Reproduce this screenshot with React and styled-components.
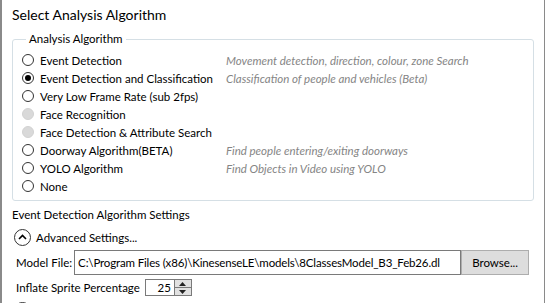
import React from "react";
import styled, { createGlobalStyle } from "styled-components";

const GlobalStyle = createGlobalStyle`
  html, body {
    margin: 0;
    padding: 0;
    background: #ffffff;
  }
  body {
    font-family: "Segoe UI", Lato, "Noto Sans", sans-serif;
    font-size: 11.5px;
    color: #000000;
  }
`;

const Frame = styled.div`
  width: 545px;
  height: 303px;
  overflow: hidden;
  border-left: 2px solid #8a8a8a;
  border-right: 1px solid #8a8a8a;
  padding-left: 10px;
  box-sizing: border-box;
  background: #ffffff;
`;

const Title = styled.div`
  font-size: 14px;
  line-height: 20px;
  padding-top: 5px;
  height: 26px;
`;

const Group = styled.fieldset`
  margin: 0;
  width: 522px;
  box-sizing: border-box;
  border: 1px solid #d5dfe5;
  border-radius: 3px;
  padding: 4px 0 5px 9px;
`;

const Legend = styled.legend`
  margin-left: 4px;
  padding: 0 3px;
  line-height: 16px;
`;

const Options = styled.div`
  display: grid;
  grid-template-columns: 204px 1fr;
  grid-auto-rows: 18px;
  align-items: center;
`;

const OptionLabel = styled.label`
  display: flex;
  align-items: center;
  gap: 6px;
  white-space: nowrap;
`;

const Radio = styled.span`
  width: 12px;
  height: 12px;
  box-sizing: border-box;
  border-radius: 50%;
  border: 1px solid ${(p) => (p.disabled ? "#d2d2d2" : "#333333")};
  background: ${(p) => (p.disabled ? "#d9d9d9" : "#ffffff")};
  display: flex;
  align-items: center;
  justify-content: center;
  flex-shrink: 0;

  &::after {
    content: "";
    width: 6px;
    height: 6px;
    border-radius: 50%;
    background: #000000;
    display: ${(p) => (p.checked ? "block" : "none")};
  }
`;

const Hint = styled.span`
  font-style: italic;
  color: #858585;
  white-space: nowrap;
`;

const SectionTitle = styled.div`
  line-height: 16px;
  padding-top: 6px;
`;

const Expander = styled.div`
  display: flex;
  align-items: center;
  gap: 5px;
  height: 20px;
  margin-top: ${(p) => p.top || 0}px;
  padding-left: 2px;
`;

const ExpandCircle = styled.span`
  width: 17px;
  height: 17px;
  box-sizing: border-box;
  border-radius: 50%;
  border: 1px solid #333333;
  display: flex;
  align-items: center;
  justify-content: center;
`;

const FieldRow = styled.div`
  display: flex;
  align-items: center;
  padding-left: 4px;
  margin-top: ${(p) => p.top || 0}px;
`;

const FieldLabel = styled.span`
  white-space: nowrap;
  margin-right: 2px;
`;

const PathBox = styled.div`
  width: 387px;
  height: 25px;
  box-sizing: border-box;
  border: 1px solid #7a7a7a;
  padding-left: 3px;
  display: flex;
  align-items: center;
  white-space: nowrap;
  overflow: hidden;
  letter-spacing: -0.15px;
`;

const Button = styled.button`
  width: 68px;
  height: 25px;
  box-sizing: border-box;
  border: 1px solid #adadad;
  background: #dddddd;
  font: inherit;
  color: #000000;
  padding: 0;
`;

const Spinner = styled.div`
  display: flex;
  width: 47px;
  height: 17px;
  box-sizing: border-box;
  border: 1px solid #7a7a7a;
  margin-left: 3px;
`;

const SpinValue = styled.span`
  flex: 1;
  text-align: right;
  padding-right: 3px;
  line-height: 15px;
`;

const SpinButtons = styled.div`
  width: 16px;
  display: flex;
  flex-direction: column;
  gap: 1px;
  background: #7a7a7a;
  border-left: 1px solid #7a7a7a;
`;

const SpinButton = styled.span`
  flex: 1;
  background: #e1e1e1;
  display: flex;
  align-items: center;
  justify-content: center;
`;

const options = [
  { label: "Event Detection", hint: "Movement detection, direction, colour, zone Search" },
  { label: "Event Detection and Classification", hint: "Classification of people and vehicles (Beta)", checked: true },
  { label: "Very Low Frame Rate (sub 2fps)" },
  { label: "Face Recognition", disabled: true },
  { label: "Face Detection & Attribute Search", disabled: true },
  { label: "Doorway Algorithm(BETA)", hint: "Find people entering/exiting doorways" },
  { label: "YOLO Algorithm", hint: "Find Objects in Video using YOLO" },
  { label: "None" },
];

const Chevron = ({ up }) => (
  <svg width="9" height="6" viewBox="0 0 9 6">
    <path
      d={up ? "M1 5 L4.5 1.5 L8 5" : "M1 1 L4.5 4.5 L8 1"}
      fill="none"
      stroke="#000"
      strokeWidth="1.6"
    />
  </svg>
);

const Tri = ({ up }) => (
  <svg width="7" height="4" viewBox="0 0 7 4">
    <path d={up ? "M0 4 L3.5 0 L7 4 Z" : "M0 0 L3.5 4 L7 0 Z"} fill="#222" />
  </svg>
);

export default function App() {
  return (
    <>
      <GlobalStyle />
      <Frame>
        <Title>Select Analysis Algorithm</Title>
        <Group>
          <Legend>Analysis Algorithm</Legend>
          <Options>
            {options.map((o) => (
              <React.Fragment key={o.label}>
                <OptionLabel>
                  <Radio checked={o.checked} disabled={o.disabled} />
                  {o.label}
                </OptionLabel>
                <Hint>{o.hint || ""}</Hint>
              </React.Fragment>
            ))}
          </Options>
        </Group>
        <SectionTitle>Event Detection Algorithm Settings</SectionTitle>
        <Expander top={4}>
          <ExpandCircle>
            <Chevron up />
          </ExpandCircle>
          Advanced Settings...
        </Expander>
        <FieldRow top={3}>
          <FieldLabel>Model File:</FieldLabel>
          <PathBox>C:\Program Files (x86)\KinesenseLE\models\8ClassesModel_B3_Feb26.dl</PathBox>
          <Button>Browse...</Button>
        </FieldRow>
        <FieldRow top={4}>
          <FieldLabel>Inflate Sprite Percentage</FieldLabel>
          <Spinner>
            <SpinValue>25</SpinValue>
            <SpinButtons>
              <SpinButton>
                <Tri up />
              </SpinButton>
              <SpinButton>
                <Tri />
              </SpinButton>
            </SpinButtons>
          </Spinner>
        </FieldRow>
        <Expander top={4}>
          <ExpandCircle>
            <Chevron />
          </ExpandCircle>
        </Expander>
      </Frame>
    </>
  );
}
